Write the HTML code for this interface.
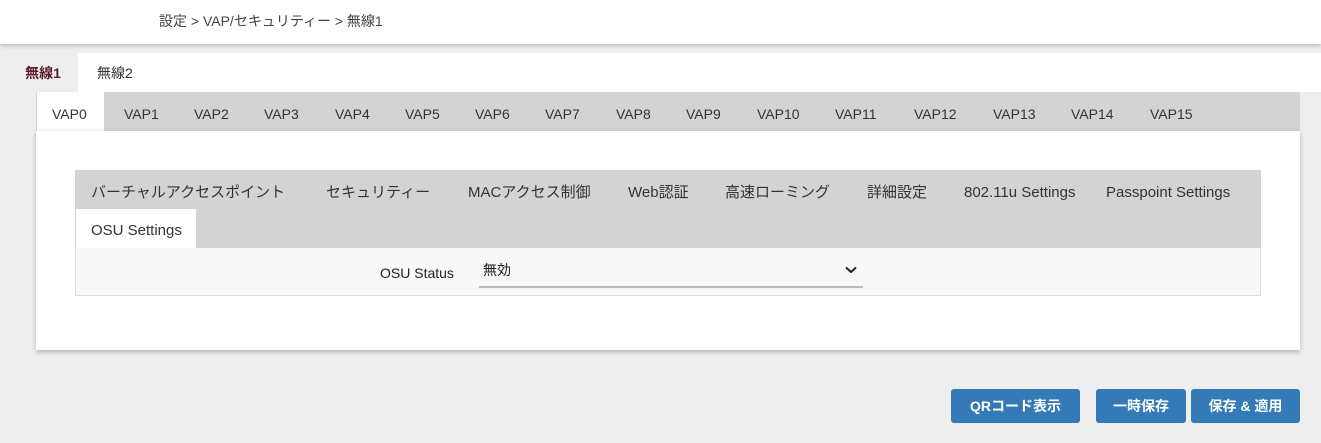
<!DOCTYPE html>
<html><head><meta charset="utf-8"><style>
*{margin:0;padding:0;box-sizing:border-box}
body{width:1321px;height:443px;background:#eeeeee;font-family:"Liberation Sans","Noto Sans CJK JP",sans-serif;color:#333;position:relative;overflow:hidden;font-size:14px}
.abs{position:absolute}
.hdr{left:0;top:0;width:1321px;height:44px;background:#fff;box-shadow:0 2px 4px rgba(0,0,0,.2)}
.crumb{left:159px;top:11px;font-size:14px;color:#444}
.trow{left:78px;top:53px;width:1243px;height:39px;background:#fff}
.t1{left:8px;top:53px;width:70px;height:39px;background:#eee;font-weight:bold;color:#5a1a2a;font-size:14px;line-height:41px;text-align:center}
.t2{left:97px;top:53px;line-height:41px;font-size:14px;color:#333}
.vbar{left:36px;top:92px;width:1264px;height:39px;background:#d3d3d3}
.vap{top:93px;line-height:42px;font-size:14px;color:#333}
.v0{left:37px;top:92px;width:67px;height:39px;background:#fff}
.panel{left:36px;top:131px;width:1264px;height:219px;background:#fff;box-shadow:0 2px 5px rgba(0,0,0,.25)}
.ibar{left:75px;top:170px;width:1186px;height:78px;background:#d3d3d3}
.it{top:172px;line-height:42px;font-size:15px;color:#333}
.osu{left:76px;top:209px;width:120px;height:39px;background:#fff;line-height:43px;padding-left:15px;font-size:15px}
.form{left:75px;top:248px;width:1186px;height:48px;background:#f8f8f8;border:1px solid #ddd;border-top:none}
.lbl{left:380px;top:265px;font-size:14px;color:#222}
.sel{left:479px;top:258px;width:384px;height:30px;border-bottom:2px solid #bbb;font-size:14px;padding-left:4px;line-height:24px;color:#222}
.btn{top:389px;height:34px;background:#337ab7;border-radius:3px;color:#fff;font-size:14px;font-weight:bold;line-height:34px;text-align:center}
</style></head><body>
<div class="abs hdr"></div>
<div class="abs crumb">設定 &gt; VAP/セキュリティー &gt; 無線1</div>
<div class="abs trow"></div>
<div class="abs t1">無線1</div>
<div class="abs t2">無線2</div>
<div class="abs vbar"></div>
<div class="abs v0"></div>
<div class="abs vap" style="left:52px">VAP0</div>
<div class="abs vap" style="left:124px">VAP1</div>
<div class="abs vap" style="left:194px">VAP2</div>
<div class="abs vap" style="left:264px">VAP3</div>
<div class="abs vap" style="left:335px">VAP4</div>
<div class="abs vap" style="left:405px">VAP5</div>
<div class="abs vap" style="left:475px">VAP6</div>
<div class="abs vap" style="left:545px">VAP7</div>
<div class="abs vap" style="left:616px">VAP8</div>
<div class="abs vap" style="left:686px">VAP9</div>
<div class="abs vap" style="left:757px">VAP10</div>
<div class="abs vap" style="left:835px">VAP11</div>
<div class="abs vap" style="left:914px">VAP12</div>
<div class="abs vap" style="left:993px">VAP13</div>
<div class="abs vap" style="left:1071px">VAP14</div>
<div class="abs vap" style="left:1150px">VAP15</div>
<div class="abs panel"></div>
<div class="abs ibar"></div>
<div class="abs it" style="left:91px">バーチャルアクセスポイント</div>
<div class="abs it" style="left:326px">セキュリティー</div>
<div class="abs it" style="left:468px">MACアクセス制御</div>
<div class="abs it" style="left:628px">Web認証</div>
<div class="abs it" style="left:725px">高速ローミング</div>
<div class="abs it" style="left:867px">詳細設定</div>
<div class="abs it" style="left:964px">802.11u Settings</div>
<div class="abs it" style="left:1106px">Passpoint Settings</div>
<div class="abs osu">OSU Settings</div>
<div class="abs form"></div>
<div class="abs lbl">OSU Status</div>
<div class="abs sel">無効
<svg style="position:absolute;right:6px;top:8px" width="12" height="8" viewBox="0 0 12 8"><path d="M1 1.5L6 6L11 1.5" fill="none" stroke="#222" stroke-width="2"/></svg></div>
<div class="abs btn" style="left:951px;width:129px">QRコード表示</div>
<div class="abs btn" style="left:1096px;width:90px">一時保存</div>
<div class="abs btn" style="left:1191px;width:109px">保存 &amp; 適用</div>
</body></html>
